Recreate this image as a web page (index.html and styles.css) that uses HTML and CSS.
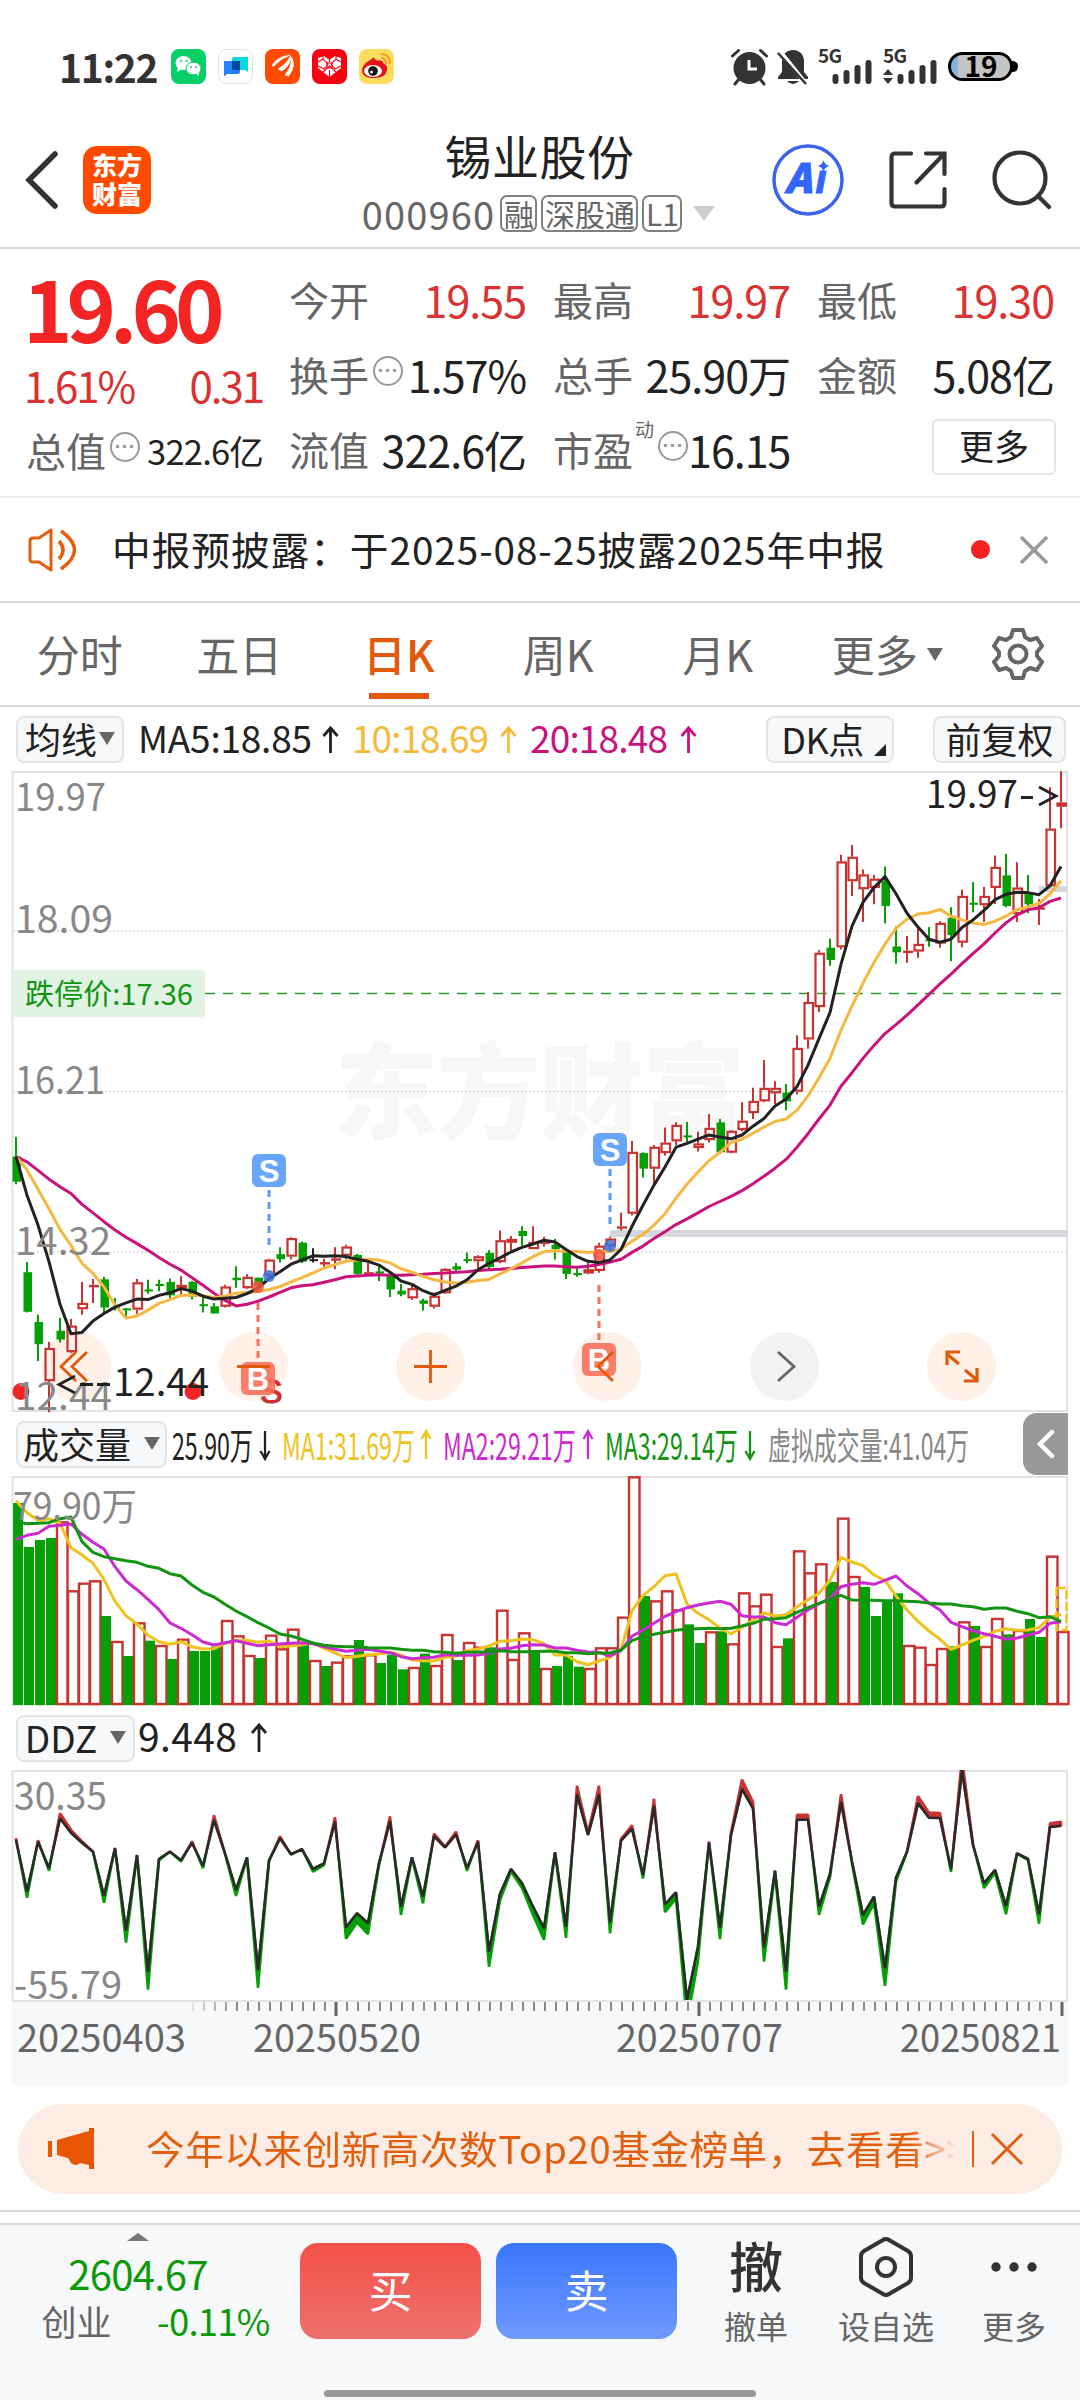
FILE: index.html
```html
<!DOCTYPE html>
<html lang="zh-CN">
<head>
    <meta charset="UTF-8">
    <meta name="viewport" content="width=device-width, initial-scale=1.0">
    <title>锡业股份 000960</title>
    <link rel="stylesheet" href="styles.css">
</head>
<body>
    <!-- Barre d'état -->
    <div class="status-bar">
        <span class="clock">11:22</span>
        <div class="app-icons">
            <svg viewBox="0 0 35 35"><rect width="35" height="35" rx="8" fill="#07d067"/><ellipse cx="12.5" cy="14" rx="8" ry="7" fill="#fff"/><path d="M7 18l-1 5 5-3z" fill="#fff"/><ellipse cx="22.500" cy="19.500" rx="7.500" ry="6.300" fill="#fff" stroke="#07d067"/><path d="M24 24l4 3-.5-4z" fill="#fff"/><g fill="#07d067"><circle cx="10" cy="12" r="1.100"/><circle cx="15.500" cy="12" r="1.100"/><circle cx="20" cy="18" r="1"/><circle cx="25" cy="18" r="1"/></g></svg>
            <svg viewBox="0 0 35 35"><rect x=".5" y=".5" width="34" height="34" rx="8" fill="#fff" stroke="#e2e2e2"/><path d="M14 10q0-2 2-2h14v15l-3-2H16q-2 0-2-2z" fill="#0bd8df"/><path d="M6 12h16v11q0 2-2 2H9l-3 2.500z" fill="#2480ff"/><path d="M14 12h8v9h-6q-2 0-2-2z" fill="#064a9c"/></svg>
            <svg viewBox="0 0 35 35"><rect width="35" height="35" rx="8" fill="#ff4a00"/><path d="M7 17Q11 8 25 6q-10 4-16 11zM13 20Q22 15 25.500 7q1 9-9 15zM20 26Q27 18 26.500 8q5 9-3 19z" fill="#fff" stroke="#fff" stroke-width=".8"/></svg>
            <svg viewBox="0 0 35 35"><rect width="35" height="35" rx="8" fill="#f80010"/><path d="M17.500 28L6 19V9l6-2 5.500 4L23 7l6 2v10z" fill="#fff"/><g stroke="#f80010" stroke-width="1.100" fill="none"><path d="M6 13l5-3 5 5-4 5-6-3M29 13l-5-3-5 5 4 5 6-3M11 23l6.500-6 6.500 6M17.500 6v7M17.500 21v8M11 6v4M24 6v4"/><path d="M15 14h5v5h-5z"/></g></svg>
            <svg viewBox="0 0 35 35"><rect width="35" height="35" rx="8" fill="#fddc62"/><path d="M3 21Q4 14 13 10q3-1 3 2 8-2 8 2 5 2 4 7-1 8-13 8Q3 29 3 21z" fill="#e3151c"/><path d="M12 13l2-5 5 5z" fill="#e3151c"/><ellipse cx="14" cy="22" rx="9" ry="6" fill="#fff"/><circle cx="14" cy="22" r="4.800" fill="#111"/><circle cx="12.500" cy="23" r="1.500" fill="#fff"/><path d="M22 9q5 0 5 6M22 5q9 0 9 10" stroke="#f5a01e" stroke-width="2" fill="none"/></svg>
        </div>
        <div class="sys-icons">
            <svg width="37" height="36" viewBox="0 0 37 36"><circle cx="18.500" cy="19" r="16" fill="#333"/><path d="M18 11v9h8" stroke="#fff" stroke-width="3" fill="none"/><path d="M1.500 7l6-5.500M35.500 7l-6-5.500M8 30l-4 5M29 30l4 5" stroke="#333" stroke-width="3" stroke-linecap="round"/></svg>
            <svg width="32" height="36" viewBox="0 0 32 36"><path d="M16 1c7 0 11 5 11 11v11l4 5v2H1v-2l4-5V12C5 6 9 1 16 1z" fill="#333"/><path d="M10 32h12q-6 6-12 0z" fill="#333"/><path d="M3 2l27 34" stroke="#fff" stroke-width="4"/><path d="M1 4l28 31" stroke="#333" stroke-width="2.500"/></svg>
            <svg width="56" height="37" viewBox="0 0 56 37"><text x="0" y="15" class="net" textLength="24">5G</text><g stroke="#333" stroke-width="6" stroke-linecap="round"><path d="M17.500 29v4M28.500 25v8M39.500 20v13M50.500 15v18"/></g></svg>
            <svg width="56" height="37" viewBox="0 0 56 37"><text x="0" y="15" class="net" textLength="24">5G</text><path d="M0 27l5-6 5 6zM0 30l5 6 5-6z" fill="#333"/><g stroke="#333" stroke-width="6" stroke-linecap="round"><path d="M17.500 29v4M28.500 25v8M39.500 20v13M50.500 15v18"/></g></svg>
            <svg width="70" height="30" viewBox="0 0 70 30"><rect x="1.500" y="1.500" width="62" height="26" rx="13" fill="#c4c4c4"/><path d="M10 2Q2 5 2 14.500T10 27z" fill="#84b1dd"/><rect x="1.500" y="1.500" width="62" height="26" rx="13" fill="none" stroke="#000" stroke-width="3"/><path d="M64 9q6 0 6 5.500T64 20z" fill="#000"/><text x="33" y="24.500" class="battery">19</text></svg>
        </div>
    </div>

    <!-- En-tête -->
    <header class="header">
        <div class="header-left">
            <svg width="34" height="58" viewBox="0 0 34 58"><path d="M30 3L4 29l26 26" fill="none" stroke="#333" stroke-width="5.500" stroke-linecap="round"/></svg>
            <div class="logo"><span>东方</span><span>财富</span></div>
        </div>
        <div class="title-box">
            <h1>锡业股份</h1>
            <div class="subtitle">
                <span class="code">000960</span><span class="tag">融</span><span class="tag">深股通</span><span class="tag">L1</span>
                <i class="tri tri-light"></i>
            </div>
        </div>
        <div class="header-right">
            <svg width="72" height="72" viewBox="0 0 72 72"><circle cx="36" cy="36" r="34" fill="#fff" stroke="#3b63ee" stroke-width="3.500"/><text x="13" y="49" class="ai">A<tspan x="43.500">ı</tspan></text><path d="M51.500 16q1 5 6 6-5 1-6 6-1-5-6-6 5-1 6-6z" fill="#3366ff"/></svg>
            <svg width="58" height="58" viewBox="0 0 58 58"><path d="M22 2.500H6q-3.500 0-3.500 3.500v46q0 3.500 3.500 3.500h46q3.500 0 3.500-3.500V38M37 2.500h18.500V23M55 3L27.500 31.500" fill="none" stroke="#333" stroke-width="4.200" stroke-linecap="round"/></svg>
            <svg width="60" height="60" viewBox="0 0 60 60"><circle cx="28" cy="28" r="25.500" fill="none" stroke="#333" stroke-width="4.200"/><path d="M46 46l11 11" stroke="#333" stroke-width="4.200" stroke-linecap="round"/></svg>
        </div>
    </header>

    <!-- Cotation -->
    <section class="quote">
        <div class="quote-main">
            <div class="price">19.60</div>
            <div class="change"><span>1.61%</span><span>0.31</span></div>
            <div class="cell small"><label>总值</label><i class="more-dot">···</i><b>322.6亿</b></div>
        </div>
        <div class="quote-grid">
            <div class="cell red"><label>今开</label><b>19.55</b></div>
            <div class="cell red"><label>最高</label><b>19.97</b></div>
            <div class="cell red"><label>最低</label><b>19.30</b></div>
            <div class="cell"><label>换手</label><i class="more-dot">···</i><b>1.57%</b></div>
            <div class="cell"><label>总手</label><b>25.90万</b></div>
            <div class="cell"><label>金额</label><b>5.08亿</b></div>
            <div class="cell"><label>流值</label><b>322.6亿</b></div>
            <div class="cell"><label>市盈</label><sup>动</sup><i class="more-dot">···</i><b>16.15</b></div>
            <div class="cell"><button class="more-btn">更多</button></div>
        </div>
    </section>

    <!-- Annonce -->
    <div class="notice">
        <svg width="52" height="44" viewBox="0 0 52 44"><path d="M2 13q0-3 3-3h6L23 2v40L11 34H5q-3 0-3-3z" fill="none" stroke="#e0600f" stroke-width="3" stroke-linejoin="round"/><path d="M31 13q8 9 0 18M33 3q27 19 0 38" fill="none" stroke="#e0600f" stroke-width="3.500"/></svg>
        <p>中报预披露：于2025-08-25披露2025年中报</p>
        <i class="red-dot"></i>
        <svg width="30" height="30" viewBox="0 0 30 30"><path d="M2 2l26 26M28 2L2 28" stroke="#999" stroke-width="3.500"/></svg>
    </div>

    <!-- Onglets -->
    <nav class="tabs">
        <a>分时</a><a>五日</a><a class="active">日K</a><a>周K</a><a>月K</a><a>更多<i class="tri"></i></a>
        <svg width="54" height="54" viewBox="0 0 54 54"><path d="M22 3h10l2 7 5 3 7-2 5 8-5 6v4l5 6-5 8-7-2-5 3-2 7H22l-2-7-5-3-7 2-5-8 5-6v-4l-5-6 5-8 7 2 5-3z" fill="none" stroke="#666" stroke-width="4" stroke-linejoin="round"/><circle cx="27" cy="27" r="8.500" fill="none" stroke="#666" stroke-width="4"/></svg>
    </nav>

    <div class="ma-row">
        <button class="chip chip-ma">均线<i class="tri"></i></button>
        <svg class="ma-text" width="600" height="64" viewBox="139 0 600 64">
            <text x="138" y="46" textLength="174" fill="#222">MA5:18.85</text>
            <text x="352" y="46" textLength="137" fill="#f5b93c">10:18.69</text>
            <text x="530" y="46" textLength="138" fill="#c9127b">20:18.48</text>
            <g fill="none" stroke-width="2.800"><path d="M330.500 46V22M323.500 29l7-8 7 8" stroke="#222"/><path d="M508.500 46V22M501.500 29l7-8 7 8" stroke="#f5b93c"/><path d="M688.500 46V22M681.500 29l7-8 7 8" stroke="#c9127b"/></g>
        </svg>
        <button class="chip chip-dk">DK点<i class="corner"></i></button>
        <button class="chip chip-fq">前复权</button>
    </div>

    <!-- Graphiques, remplis par chart.js -->
    <svg id="priceChart" class="chart" width="1080" height="641" viewBox="0 0 1080 641"></svg>

    <div class="vol-row">
        <button class="chip chip-vol">成交量<i class="tri"></i></button>
        <svg class="vol-text" width="820" height="64" viewBox="173 0 820 64">
            <text x="172" y="48" textLength="81" lengthAdjust="spacingAndGlyphs" fill="#222">25.90万</text>
            <text x="282" y="48" textLength="133" lengthAdjust="spacingAndGlyphs" fill="#efc31e">MA1:31.69万</text>
            <text x="443" y="48" textLength="133" lengthAdjust="spacingAndGlyphs" fill="#cb2bd0">MA2:29.21万</text>
            <text x="605" y="48" textLength="133" lengthAdjust="spacingAndGlyphs" fill="#129412">MA3:29.14万</text>
            <text x="768" y="48" textLength="201" lengthAdjust="spacingAndGlyphs" fill="#888">虚拟成交量:41.04万</text>
            <g fill="none" stroke-width="2.300"><path d="M265 19v28M260.500 39l4.500 8 4.500-8" stroke="#222"/><path d="M426 47V19M421.500 27l4.500-8 4.500 8" stroke="#efc31e"/><path d="M588 47V19M583.500 27l4.500-8 4.500 8" stroke="#cb2bd0"/><path d="M750 19v28M745.500 39l4.500 8 4.500-8" stroke="#129412"/></g>
        </svg>
        <div class="handle"><svg width="18" height="30" viewBox="0 0 18 30"><path d="M15 3L3 15l12 12" fill="none" stroke="#fff" stroke-width="4.500" stroke-linecap="round"/></svg></div>
    </div>
    <svg id="volChart" class="chart" width="1080" height="230" viewBox="0 0 1080 230"></svg>

    <div class="ddz-row">
        <button class="chip chip-ddz">DDZ<i class="tri"></i></button>
        <svg width="140" height="64" viewBox="0 0 140 64"><text x="3" y="46" textLength="99" class="ddz-val">9.448</text><path d="M124 46V20M117 27l7-8 7 8" fill="none" stroke="#222" stroke-width="2.800"/></svg>
    </div>
    <svg id="ddzChart" class="chart" width="1080" height="316" viewBox="0 0 1080 316"></svg>

    <!-- Bannière -->
    <div class="banner-wrap">
        <div class="banner">
            <svg width="48" height="42" viewBox="0 0 48 42"><path d="M0 13h4v16H0zM9 12L41 3V0h5v41h-5v-4l-9-2q-4 4-9 0l-3-5-11-3z" fill="#ea5504"/></svg>
            <p>今年以来创新高次数Top20基金榜单，去看看&gt;&gt;</p>
            <i class="sep"></i>
            <svg width="34" height="34" viewBox="0 0 34 34"><path d="M2 2l30 30M32 2L2 32" stroke="#e0600f" stroke-width="3"/></svg>
        </div>
    </div>

    <!-- Barre du bas -->
    <footer class="bottom-bar">
        <div class="index-box">
            <i class="tri-up"></i>
            <div class="index-val">2604.67</div>
            <div class="index-row"><span>创业</span><em>-0.11%</em></div>
        </div>
        <button class="trade buy">买</button>
        <button class="trade sell">卖</button>
        <div class="action action-first"><div class="big">撤</div><span>撤单</span></div>
        <div class="action"><div class="big"><svg width="54" height="60" viewBox="0 0 54 60"><path d="M24 3q3-2 6 0l19 11q3 2 3 5v22q0 3-3 5L30 57q-3 2-6 0L5 46q-3-2-3-5V19q0-3 3-5z" fill="none" stroke="#333" stroke-width="4"/><circle cx="27" cy="30" r="9" fill="none" stroke="#333" stroke-width="4"/></svg></div><span>设自选</span></div>
        <div class="action action-last"><div class="big"><svg width="46" height="10" viewBox="0 0 46 10"><circle cx="5" cy="5" r="4.700" fill="#333"/><circle cx="23" cy="5" r="4.700" fill="#333"/><circle cx="41" cy="5" r="4.700" fill="#333"/></svg></div><span>更多</span></div>
        <div class="home-line"></div>
    </footer>

    <script src="chart.js"></script>
</body>
</html>
```
FILE: styles.css
```css
/* Styles de base */
* {
    margin: 0;
    padding: 0;
    box-sizing: border-box;
}

body {
    width: 1080px;
    height: 2400px;
    overflow: hidden;
    background: #fff;
    color: #222;
    font-family: 'Noto Sans CJK SC', 'Noto Sans', sans-serif;
    display: flex;
    flex-direction: column;
}

body > * {
    flex-shrink: 0;
}

svg {
    display: block;
    flex-shrink: 0;
    overflow: visible;
}

button {
    font-family: inherit;
    color: #222;
}

i, em {
    font-style: normal;
}

.tri {
    display: inline-block;
    border-left: 8px solid transparent;
    border-right: 8px solid transparent;
    border-top: 13px solid #666;
}

.tri-light {
    border-left-width: 11px;
    border-right-width: 11px;
    border-top: 15px solid #ccc;
    margin-left: 7px;
}

/* Barre d'état */
.status-bar {
    height: 111px;
    padding: 22px 62px 0 59px;
    display: flex;
    align-items: center;
}

.clock {
    font-size: 39px;
    font-weight: 700;
    line-height: 40px;
    color: #333;
    width: 112px;
    letter-spacing: -1.3px;
    padding-bottom: 2px;
    white-space: nowrap;
}

.app-icons {
    display: flex;
    gap: 12px;
}

.app-icons svg {
    width: 35px;
    height: 35px;
}

.sys-icons {
    display: flex;
    align-items: center;
    gap: 9px;
    margin-left: auto;
}

.net {
    font-size: 19px;
    font-weight: 700;
    fill: #333;
}

.battery {
    font-size: 28px;
    font-weight: 700;
    text-anchor: middle;
}

/* En-tête */
.header {
    height: 138px;
    padding: 0 28px 0 25px;
    border-bottom: 2px solid #d9d9d9;
    display: grid;
    grid-template-columns: 1fr auto 1fr;
    align-items: center;
}

.header-left, .header-right {
    display: flex;
    align-items: center;
    gap: 24px;
    height: 138px;
}

.header-right {
    justify-content: flex-end;
    gap: 45px;
}

.logo {
    width: 68px;
    height: 68px;
    border-radius: 14px;
    background: #ff4a00;
    color: #fff;
    font-size: 25px;
    font-weight: 900;
    line-height: 29px;
    padding-bottom: 2px;
    display: flex;
    flex-direction: column;
    align-items: center;
    justify-content: center;
}

.title-box {
    height: 138px;
    display: flex;
    flex-direction: column;
    align-items: center;
    padding-top: 14px;
}

h1 {
    font-size: 47px;
    font-weight: 400;
    line-height: 60px;
    padding-left: 2px;
    letter-spacing: 0.5px;
}

.subtitle {
    display: flex;
    align-items: center;
    gap: 4px;
    height: 56px;
    color: #666;
}

.code {
    font-size: 38px;
    letter-spacing: 1.2px;
    margin-right: 1px;
}

.tag {
    font-size: 30px;
    height: 37px;
    line-height: 32px;
    padding: 0 1.5px;
    border: 2px solid #808080;
    border-radius: 7px;
}

.ai {
    font-family: 'Noto Sans CJK SC', sans-serif;
    font-size: 40px;
    font-weight: 900;
    font-style: italic;
    fill: #3366ff;
    stroke: #3366ff;
    stroke-width: 1.2px;
}

/* Cotation */
.quote {
    height: 249px;
    padding: 12px 26px 10px;
    border-bottom: 2px solid #eee;
    display: flex;
    gap: 26px;
}

.quote-main {
    width: 237px;
}

.price {
    height: 97px;
    line-height: 92px;
    font-size: 84px;
    font-weight: 700;
    color: #f22424;
    letter-spacing: -6px;
    margin-left: -3px;
}

.change {
    height: 54px;
    line-height: 54px;
    display: flex;
    justify-content: space-between;
    font-size: 42px;
    color: #d93232;
    letter-spacing: -2px;
    margin-left: -2px;
}

.quote-grid {
    flex: 1;
    display: grid;
    grid-template-columns: repeat(3, 237px);
    column-gap: 27px;
    grid-auto-rows: 75px;
}

.cell {
    height: 75px;
    display: flex;
    align-items: center;
    white-space: nowrap;
}

.cell label {
    font-size: 40px;
    color: #666;
}

.cell b {
    margin-left: auto;
    font-weight: 400;
    font-size: 43px;
    letter-spacing: -1px;
}

.cell.small b {
    font-size: 34.5px;
    letter-spacing: -0.8px;
}

.cell.red b {
    color: #d93232;
}

.cell sup {
    font-size: 19px;
    color: #666;
    align-self: flex-start;
    line-height: 20px;
    margin: 8px 0 0 2px;
}

.more-dot {
    width: 30px;
    height: 30px;
    margin: -5px 0 0 4px;
    border: 2.5px solid #999;
    border-radius: 50%;
    color: #999;
    font-size: 21px;
    font-weight: 700;
    line-height: 24px;
    text-align: center;
    letter-spacing: 0;
    font-family: 'Liberation Sans', sans-serif;
    flex-shrink: 0;
}

.more-btn {
    width: 124px;
    height: 56px;
    margin: -3px -2px 0 auto;
    border: 2px solid #e6e6e6;
    border-radius: 6px;
    background: #fff;
    font-size: 35px;
    line-height: 46px;
    padding-bottom: 4px;
}

/* Annonce */
.notice {
    height: 105px;
    padding: 0 31px 0 28px;
    border-bottom: 2px solid #d9d9d9;
    display: flex;
    align-items: center;
}

.notice p {
    font-size: 38.7px;
    letter-spacing: 0.95px;
    margin: 0 0 4px 32px;
    white-space: nowrap;
}

.red-dot {
    width: 19px;
    height: 19px;
    border-radius: 50%;
    background: #f52222;
    margin: 0 29px 0 auto;
}

/* Onglets */
.tabs {
    height: 104px;
    border-bottom: 2px solid #d9d9d9;
    display: flex;
    align-items: center;
    color: #666;
}

.tabs a {
    width: 159.5px;
    height: 102px;
    line-height: 101px;
    text-align: center;
    font-size: 43px;
    white-space: nowrap;
}

.tabs a.active {
    color: #e2590b;
    font-weight: 500;
    background: linear-gradient(#e2590b, #e2590b) center 90px / 60px 6px no-repeat;
}

.tabs .tri {
    margin: 0 0 11px 9px;
}

.tabs > svg {
    margin: 0 0 0 34px;
}

.tabs a:nth-child(6) {
    padding-left: 20px;
}

/* Boutons d'indicateur */
.chip {
    height: 47px;
    border: 2px solid #e1e4e8;
    border-radius: 8px;
    background: #f7f8fa;
    font-size: 36px;
    line-height: 38px;
    padding-bottom: 2px;
    display: flex;
    align-items: center;
    justify-content: center;
    gap: 2px;
    white-space: nowrap;
    flex-shrink: 0;
}

.ma-row, .vol-row, .ddz-row {
    height: 64px;
    padding: 0 12px 0 16px;
    display: flex;
    align-items: center;
}

.ma-row svg text {
    font-size: 37px;
}

.chip-ma {
    width: 108px;
    margin-right: 15px;
}

.ma-text {
    margin-right: -45px;
}

.chip-dk {
    width: 128px;
    margin-left: 72px;
    position: relative;
    padding-right: 15px;
    letter-spacing: -0.5px;
}

.corner {
    position: absolute;
    right: 6px;
    bottom: 5px;
    border-left: 12px solid transparent;
    border-bottom: 12px solid #222;
}

.chip-fq {
    width: 133px;
    margin-left: 39px;
}

.chip-vol {
    width: 151px;
    margin-right: 6px;
    gap: 13px;
}

.vol-text text {
    font-size: 37px;
}

.vol-text {
    margin-right: -120px;
}

.handle {
    width: 45px;
    height: 62px;
    margin-left: auto;
    border-radius: 14px 0 0 14px;
    background: #999;
    display: flex;
    align-items: center;
    justify-content: center;
}

.chip-ddz {
    width: 119px;
    gap: 13px;
    font-size: 37px;
}

.ddz-val {
    font-size: 39px;
    fill: #222;
}

/* Graphiques */
.axis-label {
    font-size: 38px;
    fill: #888;
}

.date-label {
    font-size: 38px;
    fill: #666;
}

.mark-label {
    font-size: 38px;
    fill: #222;
}

.limit-label {
    font-size: 29px;
    fill: #129412;
}

.watermark {
    font-size: 104px;
    font-weight: 900;
    fill: #f7f7f7;
}

.badge {
    font-family: 'Liberation Sans', sans-serif;
    font-size: 31px;
    font-weight: 700;
    fill: #fff;
    text-anchor: middle;
}

/* Bannière */
.banner-wrap {
    height: 126px;
    padding: 18px 18px 0;
    border-bottom: 2px solid #d9d9d9;
}

.banner {
    height: 90px;
    padding: 0 38px 0 30px;
    border-radius: 45px;
    background: #fdece3;
    display: flex;
    align-items: center;
}

.banner p {
    width: 810px;
    margin: 0 0 5px 50px;
    overflow: hidden;
    white-space: nowrap;
    font-size: 38.7px;
    letter-spacing: 0.45px;
    color: transparent;
    background: linear-gradient(90deg, #e0600f 765px, rgba(224, 96, 15, 0) 812px);
    -webkit-background-clip: text;
    background-clip: text;
}

.sep {
    width: 2px;
    height: 36px;
    margin: 0 16px 0 18px;
    background: #e0600f;
}

/* Barre du bas */
.bottom-bar {
    height: 177px;
    margin-top: 11px;
    border-top: 2px solid #d9d9d9;
    background: #f7f8fa;
    display: flex;
    position: relative;
}

.bottom-bar > * {
    flex-shrink: 0;
}

.index-box {
    width: 276px;
    margin-right: 24px;
    display: flex;
    flex-direction: column;
    align-items: center;
}

.tri-up {
    margin-top: 8px;
    border-left: 11px solid transparent;
    border-right: 11px solid transparent;
    border-bottom: 8px solid #777;
}

.index-val {
    height: 66px;
    line-height: 64px;
    font-size: 40px;
    color: #0a9a0a;
    letter-spacing: -0.7px;
}

.index-row {
    width: 228px;
    height: 28px;
    line-height: 28px;
    margin-left: 35px;
    display: flex;
    justify-content: space-between;
    font-size: 35px;
    color: #666;
}

.index-row em {
    font-size: 36.5px;
    color: #0a9a0a;
    letter-spacing: -0.8px;
}

.trade {
    width: 181px;
    height: 96px;
    margin: 18px 15px 0 0;
    padding-bottom: 4px;
    border: none;
    border-radius: 18px;
    color: #fff;
    font-size: 44px;
}

.buy {
    background: linear-gradient(#f45048, #ec726c);
}

.sell {
    background: linear-gradient(#3a76fb, #6f9afe);
    margin-right: 0;
}

.action {
    width: 130px;
    display: flex;
    flex-direction: column;
    align-items: center;
    color: #666;
    font-size: 32px;
    line-height: 34px;
}

.big {
    height: 83px;
    display: flex;
    align-items: center;
    color: #333;
    font-size: 54px;
    font-weight: 500;
}

.action-first {
    margin-left: 14px;
}

.action-first .big {
    padding-bottom: 4px;
}

.action-last {
    width: 126px;
}

.home-line {
    position: absolute;
    left: 324px;
    bottom: 3px;
    width: 432px;
    height: 7px;
    border-radius: 4px;
    background: #999;
}
```
FILE: chart.js
```js
const RED = '#c73431';
const GREEN = '#06a006';
const STEP = 11;

// [couleur, haut, haut du corps, bas du corps, bas]
const candles = [
    ['g',895,942,1002,1008],['g',1193,1217,1311,1313],['g',1318,1335,1388,1428],['r',1383,1397,1476,1550],
    ['g',1326,1356,1377,1384],['r',1328,1344,1407,1409],['r',1240,1290,1305,1318],['r',1233,1247,1250,1290],
    ['g',1228,1234,1301,1316],['g',1278,1300,1304,1308],['g',1302,1303,1306,1326],['r',1233,1241,1306,1316],
    ['g',1235,1258,1262,1268],['g',1235,1245,1250,1262],['g',1232,1240,1272,1278],['r',1226,1247,1256,1270],
    ['g',1238,1240,1275,1282],['g',1277,1293,1297,1313],['g',1290,1298,1315,1316],['r',1247,1251,1299,1301],
    ['g',1203,1230,1236,1254],['r',1222,1228,1255,1257],['g',1230,1230,1250,1258],['r',1185,1187,1225,1230],
    ['g',1158,1174,1186,1194],['r',1134,1136,1180,1187],['g',1144,1147,1192,1195],['k',1160,1186,1189,1194],
    ['r',1185,1193,1196,1206],['r',1158,1184,1188,1210],['r',1152,1156,1178,1186],['g',1173,1176,1221,1223],
    ['r',1195,1217,1220,1224],['g',1203,1215,1220,1238],['g',1223,1225,1258,1276],['g',1245,1261,1270,1274],
    ['r',1247,1255,1279,1283],['g',1280,1284,1292,1308],['r',1265,1273,1299,1303],['r',1207,1209,1267,1268],
    ['g',1195,1203,1211,1215],['g',1170,1186,1190,1196],['r',1177,1179,1191,1208],['g',1165,1171,1205,1210],
    ['r',1118,1141,1193,1196],['r',1131,1138,1147,1166],['g',1108,1119,1131,1154],['r',1108,1145,1162,1162],
    ['r',1133,1144,1148,1156],['g',1138,1152,1162,1187],['g',1165,1168,1221,1233],['g',1208,1219,1224,1228],
    ['r',1195,1210,1220,1222],['r',1147,1154,1214,1218],['r',1133,1137,1155,1165],['r',1076,1108,1113,1118],
    ['r',905,931,1078,1082],['g',932,934,971,992],['r',915,919,971,1010],['r',873,909,934,940],
    ['r',861,867,906,915],['g',860,892,896,908],['r',883,911,922,930],['r',841,874,903,909],
    ['g',853,861,932,936],['r',879,881,933,935],['r',813,857,879,882],['r',779,810,839,853],
    ['r',713,779,811,813],['r',763,779,792,818],['g',770,790,811,832],['r',654,684,788,795],
    ['r',551,575,664,686],['r',452,458,587,599],['g',425,446,475,489],['r',225,241,445,450],
    ['r',202,230,288,323],['r',260,272,307,385],['r',273,282,304,343],['g',253,287,347,388],
    ['g',395,443,457,484],['r',418,453,458,482],['r',396,437,455,470],['g',397,426,430,444],
    ['r',383,387,436,446],['g',350,375,416,478],['r',308,323,434,445],['g',290,339,344,362],
    ['r',302,323,345,385],['r',227,254,304,342],['g',223,274,347,350],['r',243,303,366,385],
    ['g',273,317,343,364],['r',330,350,355,392],['r',65,163,300,302],['r',27,101,111,162]
];

const ma5 = [942,1034,1105,1192,1293,1363,1360,1333,1315,1300,1290,1281,1282,1272,1266,1256,1262,1274,1281,1279,1277,1268,1255,1232,1216,1198,1188,1178,1179,1178,1180,1186,1191,1200,1217,1238,1246,1261,1271,1260,1250,1235,1211,1196,1183,1169,1158,1150,1141,1145,1163,1180,1191,1194,1188,1163,1108,1058,1010,967,920,911,901,891,896,900,891,870,852,822,806,776,725,662,600,485,395,338,303,277,318,364,397,426,433,426,398,380,357,332,319,314,315,320,299,253];
const ma10 = [942,974,1020,1066,1115,1153,1196,1220,1252,1295,1326,1321,1307,1291,1282,1272,1271,1273,1277,1274,1267,1265,1263,1258,1251,1240,1230,1219,1207,1199,1191,1188,1186,1188,1195,1209,1217,1227,1235,1240,1243,1241,1237,1234,1221,1209,1195,1180,1168,1166,1167,1168,1170,1168,1168,1162,1143,1127,1105,1078,1041,1008,979,952,932,909,901,887,872,859,853,832,798,755,709,642,585,530,481,437,400,378,366,363,355,371,380,387,391,383,371,356,349,341,318,287];
const ma20 = [942,955,975,996,1014,1030,1056,1076,1097,1117,1134,1149,1165,1182,1198,1212,1230,1248,1267,1284,1297,1293,1286,1276,1265,1254,1249,1247,1241,1235,1228,1226,1224,1223,1224,1224,1223,1222,1220,1219,1217,1216,1213,1211,1210,1208,1206,1204,1202,1202,1204,1205,1203,1199,1193,1186,1170,1155,1137,1121,1104,1090,1076,1061,1049,1037,1023,1007,989,970,949,920,888,853,820,775,743,709,678,650,629,606,582,557,532,509,484,460,437,411,387,368,356,351,336,328];

const volumes = 'g309 g441 g420 g414 r364 r571 r548 r541 g648 r723 g768 r667 g722 r735 g777 r716 g753 g753 g740 r660 r706 r765 g774 r704 r745 r686 g735 r780 g798 r785 r766 g720 r763 g789 g764 g808 r801 g761 r795 r702 g780 r726 r740 g742 r629 r777 r697 g750 r804 g798 g768 g800 r804 r742 r742 r650 r229 g588 r601 r571 r628 g673 g729 r694 g694 r730 r577 r616 r581 r738 g715 r451 r517 r490 g546 r353 r528 g561 g648 g603 g580 r735 r740 r792 r744 g739 r664 g678 r738 r654 g703 r690 g657 g711 r467 r693'.split(' ');
const volMa1 = [302,338,361,356,370,443,465,490,538,604,647,672,706,725,733,725,740,747,746,730,722,721,727,723,740,738,734,728,745,759,773,769,764,762,757,765,780,782,783,772,768,752,747,738,724,722,717,719,731,765,765,785,794,783,772,750,632,587,560,527,522,612,640,659,684,702,682,661,639,648,644,620,599,580,541,473,486,497,525,541,588,630,664,693,718,748,735,721,709,694,686,691,690,683,652,643];
const volMa2 = [418,406,400,379,376,372,403,427,447,500,543,569,598,629,669,685,704,726,735,728,722,730,737,734,732,730,728,731,740,748,754,751,748,753,758,770,776,773,772,764,766,766,765,760,747,745,737,734,735,744,744,751,756,757,768,752,709,690,670,649,635,623,615,609,604,613,647,651,651,668,674,652,630,611,596,560,553,548,553,541,528,558,581,609,630,667,680,692,701,709,718,714,706,697,670,665];
const volMa3 = [365,371,370,368,356,351,425,457,470,476,482,487,499,505,521,528,555,577,591,613,633,650,668,684,702,708,718,729,736,739,740,740,743,744,744,748,751,751,755,757,760,757,756,755,752,755,755,755,754,754,758,758,761,759,759,750,722,710,703,697,691,687,686,685,686,685,678,670,658,656,653,637,623,610,598,586,600,601,601,602,602,604,605,609,612,612,617,620,628,624,624,634,641,653,650,665];

const ddz = [300,455,305,385,235,278,308,335,468,325,572,345,695,357,335,361,308,378,240,340,450,352,690,361,295,343,328,387,370,245,562,520,550,370,243,500,352,470,288,322,283,385,305,635,462,387,430,500,565,337,560,163,285,163,548,302,266,405,197,493,457,780,620,308,563,285,147,205,622,392,695,239,239,500,402,185,365,525,470,685,413,335,190,233,234,388,90,315,430,390,498,340,357,523,261,257];

const x = i => 16 + i * STEP;
const py = v => v / 2.376 - 11;
const vy = v => v / 3 - 76;
const dy = v => v / 3 - 30;

function line(x1, y1, x2, y2, color, width = 2, extra = '') {
    return `<line x1="${x1}" y1="${y1}" x2="${x2}" y2="${y2}" stroke="${color}" stroke-width="${width}" ${extra}/>`;
}

function rect(x, y, w, h, fill, extra = '') {
    return `<rect x="${x}" y="${y}" width="${w}" height="${h}" fill="${fill}" ${extra}/>`;
}

function curve(values, scale, color) {
    const pts = values.map((v, i) => `${x(i)},${scale(v).toFixed(1)}`).join(' ');
    return `<polyline points="${pts}" fill="none" stroke="${color}" stroke-width="3" stroke-linejoin="round"/>`;
}

function label(text, x, y, width, cls = 'axis-label', extra = '') {
    return `<text x="${x}" y="${y}" textLength="${width}" lengthAdjust="spacingAndGlyphs" class="${cls}" ${extra}>${text}</text>`;
}

function frame(height) {
    return rect(12.5, 1, 1054.5, height, 'none', 'stroke="#e2e2e2" stroke-width="2"');
}

// Marque d'achat (B) ou de vente (S)
function badge(letter, cx, top, from, to, color) {
    return line(cx, from, cx, to, color, 3, 'stroke-dasharray="7 5"') +
        rect(cx - 17, top, 34, 33, color, 'rx="6" opacity="0.9"') +
        `<text x="${cx}" y="${top + 28}" class="badge">${letter}</text>`;
}

function drawPrice() {
    let s = `<text x="334" y="360" textLength="412" class="watermark">东方财富</text>` + frame(639);
    [160, 320.5, 481].forEach(y => s += line(13, y, 1066, y, '#ccc', 1, 'stroke-dasharray="2 2"'));
    s += line(205, 222.5, 1062, 222.5, '#2e9a2e', 1.5, 'stroke-dasharray="10 8"');
    s += rect(610, 459, 457, 7, '#d3d6db') + rect(1039, 115, 28, 6, '#d3d6db');

    // Fonds des boutons ronds
    [76.5, 253.5, 430.5, 607.5, 784.5, 961.5].forEach((cx, i) => {
        s += `<circle cx="${cx}" cy="595.5" r="34.5" fill="${i === 4 ? '#f2f2f2' : '#fff0e8'}"/>`;
    });

    candles.forEach(([c, hi, top, bot, lo], i) => {
        const color = c === 'r' ? RED : c === 'g' ? GREEN : '#222';
        const h = Math.max(py(bot) - py(top), 2);
        if (c === 'r') {
            s += line(x(i), py(hi), x(i), py(top), color) + line(x(i), py(bot), x(i), py(lo), color);
            s += h < 3 ? rect(x(i) - 4, py(top), 10, 2.4, color)
                : rect(x(i) - 3.5, py(top) + 1, 8.5, h - 2, 'none', `stroke="${color}" stroke-width="2.2"`);
        } else {
            s += line(x(i), py(hi), x(i), py(lo), color) + rect(x(i) - 3.5, py(top), 8.5, h, color);
        }
    });

    s += curve(ma20, py, '#c9127b') + curve(ma10, py, '#f5b942') + curve(ma5, py, '#222');

    s += `<circle cx="21" cy="620.5" r="8.5" fill="#f22424"/><circle cx="193" cy="620.5" r="8.5" fill="#f22424"/>`;
    s += `<text x="260" y="632" font-size="34" fill="${RED}" stroke="${RED}" font-family="Liberation Sans">S</text>`;
    s += badge('S', 269, 383, 419, 475, '#579cfb') + badge('B', 258, 591, 532, 590, '#f9705c');
    s += badge('S', 610, 362, 398, 454, '#579cfb') + badge('B', 599, 572, 514, 571, '#f9705c');
    s += `<circle cx="269" cy="505" r="6" fill="#3b72dc" opacity=".85"/><circle cx="258" cy="516" r="6" fill="#f4553c" opacity=".85"/>`;
    s += `<circle cx="610" cy="475" r="6" fill="#3b72dc" opacity=".85"/><circle cx="599" cy="484" r="6" fill="#f4553c" opacity=".85"/>`;

    s += `<g fill="none" stroke="#e2590b" stroke-width="2.8">
        <path d="M76 581L61 595.5l15 14.5M87 581L72 595.5l15 14.5M237 595.5h33M414 595.5h33M430.5 579v33M613 581l-15 14.5 15 14.5"/>
        <path d="M959 593l-12-10M947 594v-13h13M965 599l12 10M977 597v13h-13" stroke-width="3.2"/>
        <path d="M778 581l16 14.5-16 14.5" stroke="#666"/></g>`;

    s += label('19.97', 15, 39.5, 91) + label('18.09', 15, 162, 98) + label('16.21', 15, 323, 90);
    s += label('14.32', 15, 483.5, 96) + label('12.44', 15, 639, 97);
    s += rect(12, 199, 193, 47, '#e1f4e3', 'rx="4"') + label('跌停价:17.36', 25, 234, 168, 'limit-label');
    s += label('12.44', 113, 624.5, 96, 'mark-label') + label('19.97', 926, 37, 92, 'mark-label');
    s += `<path d="M75 605l-16 8.5 16 8.5M80 613.5h13M97 613.5h13M1021 26.5h12M1039 16l17 9-17 9" fill="none" stroke="#222" stroke-width="2.8"/>`;
    document.getElementById('priceChart').innerHTML = s;
}

function drawVolume() {
    let s = frame(228);
    volumes.forEach((item, i) => {
        const y = vy(+item.slice(1));
        if (item[0] === 'g') {
            s += rect(x(i) - 3, y, 10, 229 - y, GREEN);
        } else {
            s += rect(x(i) - 3, y + 1, 10.5, 227 - y, '#fff', `stroke="${RED}" stroke-width="2.4"`);
        }
    });
    s += rect(1056.5, 112, 10, 42, 'none', 'stroke="#efc31e" stroke-width="2.5" stroke-dasharray="9 3"');
    s += curve(volMa1, vy, '#efc31e') + curve(volMa2, vy, '#cb2bd0') + curve(volMa3, vy, '#129412');
    s += label('79.90万', 13, 44, 124);
    document.getElementById('volChart').innerHTML = s;
}

function drawDdz() {
    let s = rect(12, 232, 1056, 84, '#f7f8fa') + frame(230);
    const mid = 335;
    const shifted = ddz.map(v => v + (v - mid) * 0.15);
    const pts = ddz.map((v, i) => `${x(i)},${dy(v).toFixed(1)}`);
    const back = shifted.map((v, i) => `${x(i)},${dy(v).toFixed(1)}`).reverse();
    s += `<defs><linearGradient id="zone" gradientUnits="userSpaceOnUse" x1="0" y1="0" x2="0" y2="230">
        <stop offset="0.36" stop-color="${RED}"/><stop offset="0.36" stop-color="${GREEN}"/></linearGradient>
        <clipPath id="ddzClip"><rect x="12" y="0" width="1056" height="230"/></clipPath></defs>`;
    s += `<g clip-path="url(#ddzClip)" stroke-linejoin="bevel">`;
    s += `<polygon points="${pts.join(' ')} ${back.join(' ')}" fill="url(#zone)" stroke="url(#zone)" stroke-width="2.6"/>`;
    s += `<polyline points="${pts.join(' ')}" fill="none" stroke="#2a2a2a" stroke-width="2.6"/></g>`;
    s += label('30.35', 14, 40, 93) + label('-55.79', 14, 229, 108);

    // Graduations de la date
    for (let i = 0; i < 80; i++) {
        const major = i === 13 || i === 46 || i === 79;
        s += line(193 + i * STEP, 232, 193 + i * STEP, major ? 246 : 241, '#666', major ? 3 : 1.5, `opacity="${Math.min(1, (i + 1) / 5)}"`);
    }
    s += label('20250403', 17, 282, 169, 'date-label') + label('20250520', 253, 282, 168, 'date-label');
    s += label('20250707', 616, 282, 167, 'date-label') + label('20250821', 900, 282, 161, 'date-label');
    document.getElementById('ddzChart').innerHTML = s;
}

drawPrice();
drawVolume();
drawDdz();
```
